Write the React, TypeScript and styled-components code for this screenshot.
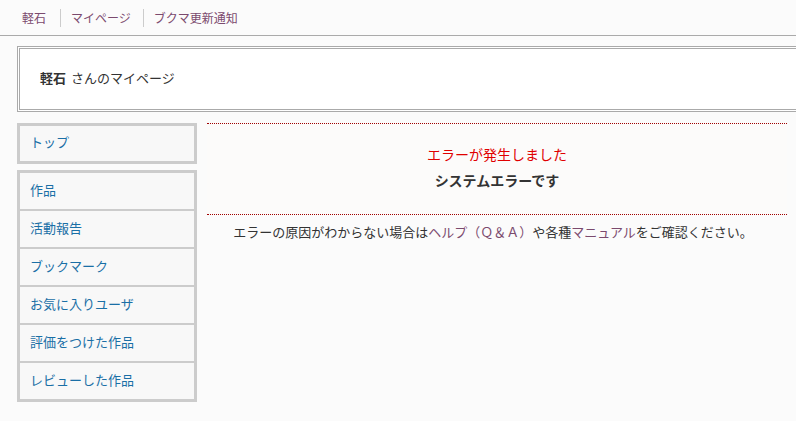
import React from 'react';
import styled, { createGlobalStyle } from 'styled-components';

const GlobalStyle = createGlobalStyle`
  html, body {
    margin: 0;
    padding: 0;
    background: #fbfbfb;
    overflow: hidden;
  }
  body {
    font-family: "Noto Sans CJK JP", "Noto Sans", sans-serif;
    font-size: 13px;
    color: #333;
  }
  a {
    text-decoration: none;
  }
`;

const NavBar = styled.nav`
  display: flex;
  align-items: center;
  height: 35px;
  padding-left: 10px;
  border-bottom: 1px solid #aaa;
`;

const NavLink = styled.a`
  font-size: 12px;
  line-height: 18px;
  color: #7b4a6e;
  padding: 0 12px 0 10px;
  border-left: 1px solid #ccc;
  &:first-child {
    border-left: none;
    padding: 0 14px 0 12px;
  }
`;

const Page = styled.div`
  padding: 10px 0 0 17px;
`;

const ProfileBox = styled.div`
  display: flex;
  align-items: center;
  padding: 0 0 3px 20px;
  box-sizing: border-box;
  height: 66px;
  background: #fff;
  border: 3px double #aaa;
  border-right: none;
  color: #333;
`;

const UserName = styled.strong`
  font-weight: bold;
  margin-right: 5px;
`;

const Columns = styled.div`
  display: flex;
  gap: 10px;
  margin-top: 11px;
`;

const Sidebar = styled.aside`
  width: 180px;
  display: flex;
  flex-direction: column;
  gap: 6px;
`;

const MenuGroup = styled.ul`
  list-style: none;
  margin: 0;
  padding: 0;
  border: 3px solid #ccc;
  background: #f8f8f8;
`;

const MenuItem = styled.li<{ $tall?: boolean }>`
  height: ${(p) => (p.$tall ? '32px' : '33px')};
  display: flex;
  align-items: center;
  padding: 0 0 3px 10px;
  border-top: 2px solid #ccc;
  &:first-child {
    border-top: none;
  }
`;

const MenuLink = styled.a`
  color: #1a6fa6;
  font-size: 13px;
  line-height: 18px;
`;

const Main = styled.main`
  width: 580px;
`;

const ErrorPanel = styled.div`
  background: #fcfbfa;
  border-top: 1px dotted #a00000;
  border-bottom: 1px dotted #a00000;
  padding: 19px 0 21px;
  text-align: center;
  font-size: 14px;
`;

const ErrorTitle = styled.div`
  color: #e00000;
  line-height: 22px;
`;

const ErrorMessage = styled.div`
  font-weight: bold;
  color: #333;
  line-height: 26px;
  margin-top: 2px;
`;

const HelpText = styled.p`
  margin: 7px 0 0;
  padding-right: 8px;
  text-align: center;
  line-height: 20px;
  color: #333;
`;

const InlineLink = styled.a`
  color: #7b4a6e;
`;

const menu = ['作品', '活動報告', 'ブックマーク', 'お気に入りユーザ', '評価をつけた作品', 'レビューした作品'];

export default function App() {
  return (
    <>
      <GlobalStyle />
      <NavBar>
        <NavLink href="#">軽石</NavLink>
        <NavLink href="#">マイページ</NavLink>
        <NavLink href="#">ブクマ更新通知</NavLink>
      </NavBar>
      <Page>
        <ProfileBox>
          <UserName>軽石</UserName>さんのマイページ
        </ProfileBox>
        <Columns>
          <Sidebar>
            <MenuGroup>
              <MenuItem $tall>
                <MenuLink href="#">トップ</MenuLink>
              </MenuItem>
            </MenuGroup>
            <MenuGroup>
              {menu.map((m) => (
                <MenuItem key={m}>
                  <MenuLink href="#">{m}</MenuLink>
                </MenuItem>
              ))}
            </MenuGroup>
          </Sidebar>
          <Main>
            <ErrorPanel>
              <ErrorTitle>エラーが発生しました</ErrorTitle>
              <ErrorMessage>システムエラーです</ErrorMessage>
            </ErrorPanel>
            <HelpText>
              エラーの原因がわからない場合は<InlineLink href="#">ヘルプ（Ｑ＆Ａ）</InlineLink>や各種<InlineLink href="#">マニュアル</InlineLink>をご確認ください。
            </HelpText>
          </Main>
        </Columns>
      </Page>
    </>
  );
}
